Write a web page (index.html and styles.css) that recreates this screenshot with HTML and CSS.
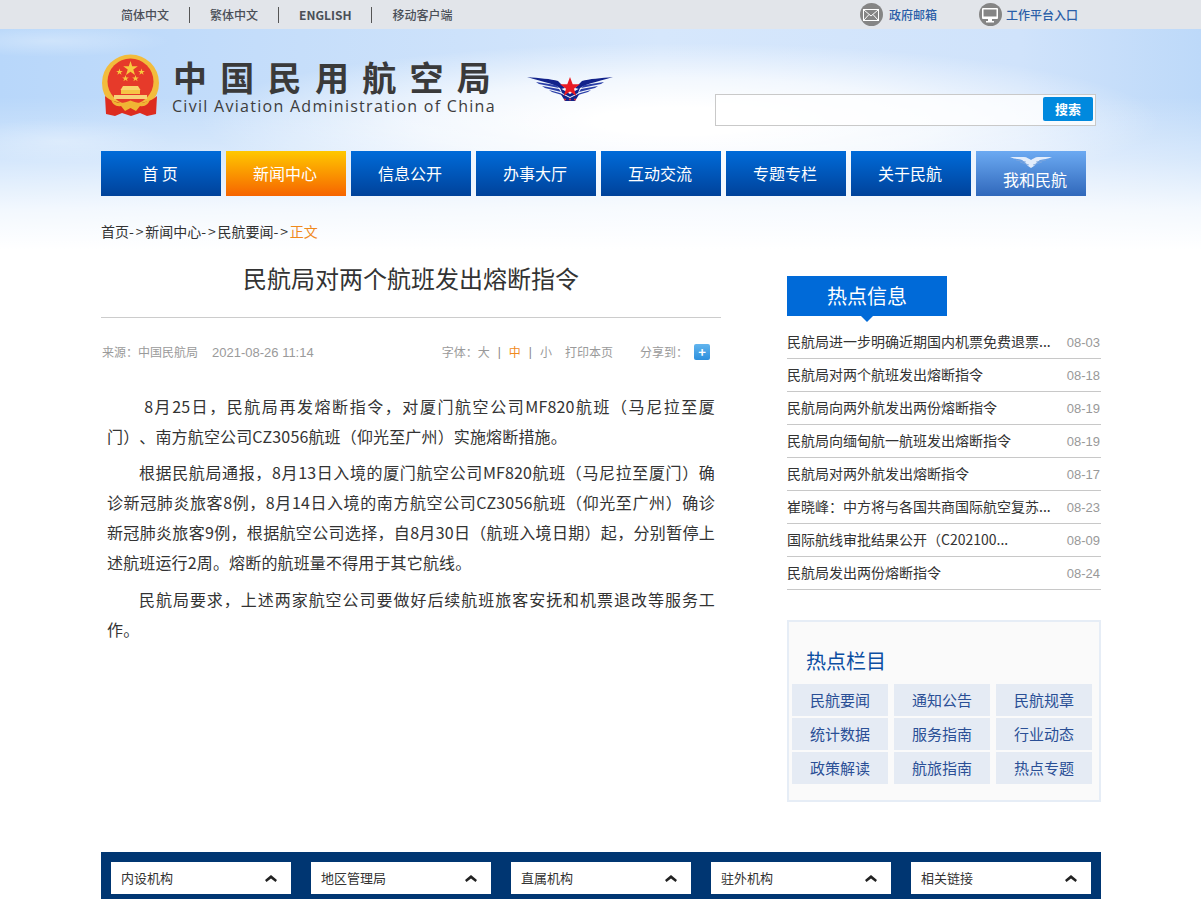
FILE: index.html
```html
<!DOCTYPE html>
<html lang="zh-CN">
<head>
<meta charset="utf-8">
<title>民航局对两个航班发出熔断指令</title>
<link rel="stylesheet" href="styles.css">
</head>
<body>
<div class="hero"></div>
<div class="topbar">
  <div class="wrap topbar-in">
    <div class="langs">
      <a class="lang first">简体中文</a><a class="lang">繁体中文</a><a class="lang en">ENGLISH</a><a class="lang">移动客户端</a>
    </div>
    <div class="tools">
      <a class="tool mail"><span class="tool-ic"><svg width="16" height="12" viewBox="0 0 16 12"><rect x=".5" y=".5" width="15" height="11" fill="none" stroke="#fff"/><path d="M1 1l7 6 7-6M1 11l5-5.500M15 11l-5-5.500" fill="none" stroke="#fff"/></svg></span>政府邮箱</a>
      <a class="tool work"><span class="tool-ic"><svg width="16" height="16" viewBox="0 0 16 16"><rect x="0" y="1" width="16" height="11" rx="1" fill="#fff"/><rect x="1.500" y="2.500" width="13" height="7" fill="#858585"/><rect x="6" y="12" width="4" height="2" fill="#fff"/><rect x="4" y="14" width="8" height="1.500" fill="#fff"/></svg></span>工作平台入口</a>
    </div>
  </div>
</div>
<div class="wrap">
  <header class="brand">
    <svg class="emblem" width="60" height="63" viewBox="0 0 60 63">
      <circle cx="29.500" cy="29" r="28.500" fill="#f2bc3c"/>
      <circle cx="29.500" cy="27.500" r="23" fill="#e63a2a"/>
      <path d="M29.500 7l1.700 5.300h5.600l-4.500 3.300 1.700 5.400-4.500-3.300-4.500 3.300 1.700-5.400-4.500-3.300h5.600z" fill="#f7c93e"/>
      <path d="M18.500 14.500l.8 2.400h2.500l-2 1.500.8 2.400-2.100-1.500-2.100 1.500.8-2.400-2-1.500h2.500zM40.500 14.500l.8 2.400h2.500l-2 1.500.8 2.400-2.100-1.500-2.100 1.500.8-2.400-2-1.500h2.500zM24.500 21l.8 2.400h2.500l-2 1.500.8 2.400-2.100-1.500-2.100 1.500.8-2.400-2-1.500h2.500zM34.500 21l.8 2.400h2.500l-2 1.500.8 2.400-2.100-1.500-2.100 1.500.8-2.400-2-1.500h2.500z" fill="#f7c93e"/>
      <path d="M22 32h15l2.500 4H19.500z" fill="#f9d36a"/>
      <path d="M20 36h19v4H20z" fill="#f6c545"/>
      <path d="M13 41h33v4H13z" fill="#f7d27a"/>
      <path d="M4 42c3 3 7 5 12 6l14 4 14-4c5-1 9-3 12-6l-1 18-9 2-7-3-9 3-9-3-7 3-9-2z" fill="#dd2c1f"/>
      <path d="M10 45c5 5 12 5 19.500 1.500C37 50 44 50 49 45c-1 5-5 8-10 7l-4 5-5.500-3-5.500 3-4-5c-5 1-9-2-10-7z" fill="#f0b534"/>
    </svg>
    <div class="brand-text">
      <div class="brand-cn">中国民用航空局</div>
      <div class="brand-en">Civil Aviation Administration of China</div>
    </div>
    <svg class="wings" width="86" height="26" viewBox="0 0 86 26">
      <g fill="#12238b">
        <path d="M0 1C12 2 24 3 31 5l7 7-4 1C29 8 16 6 0 1z"/>
        <path d="M33 17l10 5 10-5-5 8H38z"/>
        <path d="M33 12l10 6 10-6-2 5-8 4-8-4z"/>
        <path d="M86 1C74 2 62 3 55 5l-7 7 4 1C57 8 70 6 86 1z"/>
      </g>
      <g fill="#2a3fa8">
        <path d="M9 6l20 3 3 3L12 8z"/><path d="M15 10l17 3 2 3-16-4z"/><path d="M22 14l11 3 2 2-10-3z"/>
        <path d="M77 6l-20 3-3 3 20-4z"/><path d="M71 10l-17 3-2 3 16-4z"/><path d="M64 14l-11 3-2 2 10-3z"/>
      </g>
      <path d="M43 1l2.700 7.300h7.300l-6 4.400 2.300 7.300-6.300-4.500-6.300 4.500 2.300-7.300-6-4.400h7.300z" fill="#ea1c24"/>
      <g fill="#e8313b"><circle cx="38" cy="23.500" r="1"/><circle cx="43" cy="23.500" r="1"/><circle cx="48" cy="23.500" r="1"/></g>
    </svg>
    <form class="search">
      <button class="search-btn" type="button">搜索</button>
    </form>
  </header>
  <nav class="nav">
    <a class="nav-item">首 页</a>
    <a class="nav-item on">新闻中心</a>
    <a class="nav-item">信息公开</a>
    <a class="nav-item">办事大厅</a>
    <a class="nav-item">互动交流</a>
    <a class="nav-item">专题专栏</a>
    <a class="nav-item">关于民航</a>
    <a class="nav-item me">
      <svg class="me-ic" width="42" height="12" viewBox="0 0 42 12"><path d="M0 0h14c3 0 5 2 7 3 2-1 4-3 7-3h14c-4 2-9 2-12 3-3 2-4 4-6 6l-3 2-3-2c-2-2-3-4-6-6C9 2 4 2 0 0z" fill="#e3edfb"/><path d="M6 3l10 2M10 5l9 3M36 3l-10 2M32 5l-9 3" stroke="#7ea6dc" stroke-width=".8"/></svg>
      我和民航
    </a>
  </nav>
  <div class="crumb">首页<span class="arr">-&gt;</span>新闻中心<span class="arr">-&gt;</span>民航要闻<span class="arr">-&gt;</span><span class="cur">正文</span></div>
  <div class="cols">
    <main class="article">
      <h1 class="title">民航局对两个航班发出熔断指令</h1>
      <div class="meta">
        <div class="meta-l"><span>来源：中国民航局</span><span class="date">2021-08-26 11:14</span></div>
        <div class="meta-r">
          <span>字体：大</span><i>|</i><span class="cur">中</span><i>|</i><span>小</span><span class="print">打印本页</span><span class="share">分享到：</span><b class="plus">+</b>
        </div>
      </div>
      <div class="body">
        <p>&nbsp;8月25日，民航局再发熔断指令，对厦门航空公司MF820航班（马尼拉至厦门）、南方航空公司CZ3056航班（仰光至广州）实施熔断措施。</p>
        <p>根据民航局通报，8月13日入境的厦门航空公司MF820航班（马尼拉至厦门）确诊新冠肺炎旅客8例，8月14日入境的南方航空公司CZ3056航班（仰光至广州）确诊新冠肺炎旅客9例，根据航空公司选择，自8月30日（航班入境日期）起，分别暂停上述航班运行2周。熔断的航班量不得用于其它航线。</p>
        <p>民航局要求，上述两家航空公司要做好后续航班旅客安抚和机票退改等服务工作。</p>
      </div>
    </main>
    <aside class="side">
      <h2 class="hot-tab">热点信息</h2>
      <ul class="hot">
        <li><a>民航局进一步明确近期国内机票免费退票...</a><time>08-03</time></li>
        <li><a>民航局对两个航班发出熔断指令</a><time>08-18</time></li>
        <li><a>民航局向两外航发出两份熔断指令</a><time>08-19</time></li>
        <li><a>民航局向缅甸航一航班发出熔断指令</a><time>08-19</time></li>
        <li><a>民航局对两外航发出熔断指令</a><time>08-17</time></li>
        <li><a>崔晓峰：中方将与各国共商国际航空复苏...</a><time>08-23</time></li>
        <li><a>国际航线审批结果公开（C202100...</a><time>08-09</time></li>
        <li><a>民航局发出两份熔断指令</a><time>08-24</time></li>
      </ul>
      <section class="box">
        <h3 class="box-t">热点栏目</h3>
        <div class="box-g">
          <a>民航要闻</a><a>通知公告</a><a>民航规章</a>
          <a>统计数据</a><a>服务指南</a><a>行业动态</a>
          <a>政策解读</a><a>航旅指南</a><a>热点专题</a>
        </div>
      </section>
    </aside>
  </div>
  <footer class="links">
    <div class="sel">内设机构<svg class="chev" width="12" height="7" viewBox="0 0 12 7"><path d="M6 0l6 5-1.500 2L6 3.400 1.500 7 0 5z" fill="#222"/></svg></div>
    <div class="sel">地区管理局<svg class="chev" width="12" height="7" viewBox="0 0 12 7"><path d="M6 0l6 5-1.500 2L6 3.400 1.500 7 0 5z" fill="#222"/></svg></div>
    <div class="sel">直属机构<svg class="chev" width="12" height="7" viewBox="0 0 12 7"><path d="M6 0l6 5-1.500 2L6 3.400 1.500 7 0 5z" fill="#222"/></svg></div>
    <div class="sel">驻外机构<svg class="chev" width="12" height="7" viewBox="0 0 12 7"><path d="M6 0l6 5-1.500 2L6 3.400 1.500 7 0 5z" fill="#222"/></svg></div>
    <div class="sel">相关链接<svg class="chev" width="12" height="7" viewBox="0 0 12 7"><path d="M6 0l6 5-1.500 2L6 3.400 1.500 7 0 5z" fill="#222"/></svg></div>
  </footer>
</div>
</body>
</html>
```
FILE: styles.css
```css
* { box-sizing: border-box; }
html, body { margin: 0; padding: 0; }
body {
  position: relative;
  height: 899px;
  overflow: hidden;
  background: #fff;
  font-family: "Noto Sans CJK SC", "Liberation Sans", sans-serif;
  color: #333;
  text-spacing-trim: space-all;
}
a { color: inherit; text-decoration: none; }
.hero {
  position: absolute;
  left: 0; right: 0; top: 29px;
  height: 225px;
  background:
    linear-gradient(180deg, rgba(255,255,255,0) 30%, rgba(255,255,255,.4) 58%, rgba(255,255,255,.82) 80%, #fff 98%),
    radial-gradient(ellipse 480px 78px at 680px 92px, #fff 18%, rgba(255,255,255,.7) 55%, rgba(255,255,255,0)),
    radial-gradient(ellipse 120px 16px at 50px 12px, rgba(255,255,255,.3), rgba(255,255,255,0)),
    radial-gradient(ellipse 110px 22px at 60px 112px, rgba(255,255,255,.3), rgba(255,255,255,0)),
    linear-gradient(90deg, #b8d7fa 0%, #c6defa 25%, #d6e7fc 55%, #d0e3fb 85%, #bdd9f9 100%);
}
.wrap { position: relative; width: 1000px; margin: 0 0 0 101px; }
.topbar { position: relative; height: 29px; background: #e2e5ea; }
.topbar-in { display: flex; justify-content: space-between; height: 29px; }
.langs { display: flex; align-items: center; padding-left: 20px; }
.lang { font-size: 12px; line-height: 16px; color: #4a4f57; padding: 0 20px; border-left: 1px solid #555; font-weight: 500; }
.lang.first { padding-left: 0; border-left: 0; }
.lang.en { font-weight: 700; }
.tools { display: flex; align-items: center; padding-right: 23px; }
.tool { display: flex; align-items: center; font-size: 12px; color: #2a5ea8; font-weight: 500; }
.tool.mail { margin-right: 42px; }
.tool-ic { width: 23px; height: 23px; border-radius: 50%; background: #858585; display: flex; align-items: center; justify-content: center; margin-right: 6px; }
.work .tool-ic { margin-right: 4px; }
.brand { position: relative; height: 122px; display: flex; }
.emblem { margin: 25px 0 0 0; flex: none; }
.brand-text { margin: 29px 0 0 11px; color: #3a3a3a; width: 355px; flex: none; }
.brand-cn { font-size: 34px; line-height: 38px; height: 38px; letter-spacing: 13.300px; margin-left: 1px; font-weight: 700; white-space: nowrap; }
.brand-en { font-family: "Open Sans", "Liberation Sans", sans-serif; font-size: 16px; line-height: 20px; letter-spacing: 1.280px; white-space: nowrap; color: #3d3d3d; }
.wings { margin: 47px 0 0 0; flex: none; }
.search { position: absolute; left: 614px; top: 65px; width: 381px; height: 32px; border: 1px solid #c9c9c9; background: rgba(255,255,255,.75); display: flex; justify-content: flex-end; align-items: flex-start; padding: 2px 2px 0 0; }
.search-btn { width: 50px; height: 24px; border: 0; padding: 0; background: #0089de; border-radius: 2px; color: #fff; font: 700 13px/24px "Noto Sans CJK SC", sans-serif; }
.nav { display: flex; gap: 5px; height: 45px; }
.nav-item { width: 120px; height: 45px; text-align: center; font-size: 16px; line-height: 45px; color: #fff; padding-right: 2px; background: linear-gradient(180deg, #006bd9, #00429a); }
.nav-item.on { background: linear-gradient(180deg, #ffc800, #f66400); }
.nav-item.me { width: 110px; position: relative; background: linear-gradient(180deg, #6caaf2, #3068bb); line-height: 56px; padding-left: 10px; }
.me-ic { position: absolute; left: 34px; top: 6px; }
.crumb { margin-top: 24px; font-size: 14px; line-height: 22px; color: #333; height: 22px; }
.crumb .cur { color: #f08a1c; }
.arr { letter-spacing: 1.800px; }
.cols { display: flex; justify-content: space-between; height: 610px; }
.article { width: 620px; }
.title { margin: 18px 0 0; height: 58px; font-size: 24px; font-weight: 400; line-height: 36px; text-align: center; color: #333; border-bottom: 1px solid #ccc; }
.meta { display: flex; justify-content: space-between; font-size: 12px; line-height: 18px; color: #9a9a9a; padding: 25px 11px 0 1px; height: 64px; }
.meta-l .date { margin-left: 14px; font-family: "Liberation Sans", sans-serif; font-size: 13px; }
.meta-r { display: flex; align-items: center; height: 18px; }
.meta-r i { font-style: normal; font-family: "Liberation Sans", sans-serif; margin: 0 8px; color: #888; }
.meta-r .cur { color: #f08a1c; }
.print { margin-left: 13px; }
.share { margin-left: 27px; margin-right: 6px; }
.plus { width: 16px; height: 16px; border-radius: 2px; background: linear-gradient(180deg, #62b5ee, #2c8fdd); color: #fff; font-size: 13px; line-height: 16px; text-align: center; }
.body { padding: 0 6px; margin-top: 8.600px; font-size: 16px; line-height: 30px; color: #333; letter-spacing: .150px; }
.body p { margin: 0 0 6.500px; text-indent: 2em; text-align: justify; }
.side { width: 314px; padding-top: 34px; }
.hot-tab { margin: 0; width: 160px; height: 40px; background: #006ad8; color: #fff; font-size: 20px; font-weight: 400; line-height: 40px; text-align: center; position: relative; }
.hot-tab::after { content: ""; position: absolute; left: 74px; top: 40px; border: 6px solid transparent; border-top-color: #006ad8; border-bottom: 0; }
.hot { list-style: none; margin: 10px 0 0; padding: 0; }
.hot li { display: flex; justify-content: space-between; align-items: center; height: 33px; border-bottom: 1px solid #c8c8c8; font-size: 14px; line-height: 30px; color: #333; padding-right: 1px; }
.hot li a { padding-bottom: 2px; }
.hot time { font-size: 13px; line-height: 30px; padding-top: 2px; color: #999; font-family: "Liberation Sans", sans-serif; }
.box { margin-top: 30px; height: 182px; border: 2px solid #e6edf6; background: #fafafa; padding: 0 3px; }
.box-t { margin: 0; padding: 24px 0 0 14px; height: 62px; font-size: 20px; line-height: 30px; font-weight: 400; color: #0b4ea2; }
.box-g { display: grid; grid-template-columns: repeat(3, 96px); grid-auto-rows: 32px; column-gap: 6px; row-gap: 2px; }
.box-g a { background: #e5ebf4; text-align: center; font-size: 15px; line-height: 32px; color: #2a4f96; }
.links { width: 1000px; height: 47px; background: #003672; padding: 10px 10px 0; display: flex; gap: 20px; }
.sel { width: 180px; height: 32px; background: #fff; padding: 0 14px 0 10px; font-size: 13px; line-height: 32px; color: #333; display: flex; justify-content: space-between; align-items: center; }
.chev { flex: none; }
```
